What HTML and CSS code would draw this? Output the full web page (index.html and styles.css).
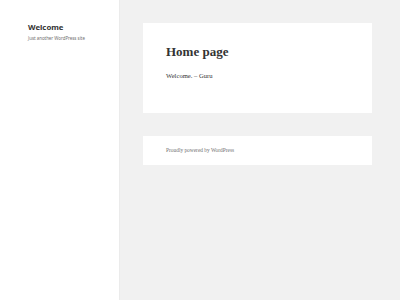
FILE: index.html
```html
<!DOCTYPE html>
<html lang="en">
<head>
    <meta charset="UTF-8">
    <meta name="viewport" content="width=device-width, initial-scale=1.0">
    <title>Welcome</title>
    <link rel="stylesheet" href="styles.css">
</head>
<body>
    <div class="sidebar">
        <div class="site-title">Welcome</div>
        <p class="site-description">Just another WordPress site</p>
    </div>
    <div class="content">
        <article class="page">
            <h1 class="entry-title">Home page</h1>
            <p class="entry-content">Welcome. &ndash; Guru</p>
        </article>
        <footer class="site-footer">
            Proudly powered by WordPress
        </footer>
    </div>
</body>
</html>
```

FILE: styles.css
```css
html, body {
    height: 100%;
}
body {
    margin: 0;
    padding: 0;
    background-color: #f1f1f1;
    color: #333;
    font-family: "Liberation Serif", "DejaVu Serif", serif;
    display: flex;
}
.sidebar {
    width: 119px;
    flex-shrink: 0;
    background: #fff;
    box-shadow: 0 0 1px rgba(0, 0, 0, 0.15);
    padding: 22px 0 0 28px;
    box-sizing: border-box;
}
.site-title {
    font-family: "Noto Sans", "Open Sans", sans-serif;
    font-weight: bold;
    font-size: 7.8px;
    line-height: 11px;
    color: #333;
}
.site-description {
    font-family: "Noto Sans", "Open Sans", sans-serif;
    font-size: 4.4px;
    line-height: 7px;
    color: #707070;
    margin: 2px 0 0;
}
.content {
    flex: 1;
    padding: 23px 28px 0 24px;
}
.page {
    background: #fff;
    height: 90px;
    box-sizing: border-box;
    padding: 21px 23px 0;
}
.entry-title {
    font-size: 13px;
    font-weight: bold;
    line-height: 16px;
    margin: 0;
}
.entry-content {
    font-size: 6.6px;
    line-height: 9px;
    color: #333;
    margin: 11px 0 0;
}
.site-footer {
    background: #fff;
    margin-top: 23px;
    height: 29px;
    box-sizing: border-box;
    padding: 11px 23px 0;
    font-size: 5.4px;
    line-height: 7px;
    color: #707070;
}
```
